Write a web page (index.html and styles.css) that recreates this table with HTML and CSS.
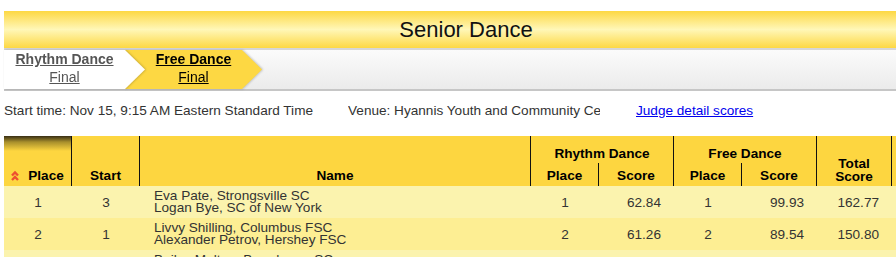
FILE: index.html
```html
<!DOCTYPE html>
<html lang="en">
<head>
<meta charset="utf-8">
<title>Senior Dance</title>
<link rel="stylesheet" href="styles.css">
</head>
<body>
<div class="page">
  <div class="title">Senior Dance</div>
  <div class="tabbar">
    <div class="tab-wrap first">
      <a class="tab done" href="#"><span class="seg">Rhythm Dance</span><span class="lvl">Final</span></a>
    </div>
    <div class="tab-wrap second">
      <a class="tab active" href="#"><span class="seg">Free Dance</span><span class="lvl">Final</span></a>
    </div>
  </div>
  <div class="info">
    <span class="start">Start time: Nov 15, 9:15 AM Eastern Standard Time</span>
    <span class="venue">Venue: Hyannis Youth and Community Center</span>
    <a class="judge" href="#">Judge detail scores</a>
  </div>
  <table class="results">
    <colgroup>
      <col class="c-place"><col class="c-start"><col class="c-name">
      <col class="c-rp"><col class="c-rs"><col class="c-fp"><col class="c-fs">
      <col class="c-total"><col class="c-extra">
    </colgroup>
    <thead>
      <tr class="h1">
        <th rowspan="2" class="sorted"><span class="sort-icon"><svg width="8" height="11" viewBox="0 0 8 11"><polyline points="1,5.5 4,2.5 7,5.5" fill="none" stroke="#ee4f30" stroke-width="2.4"/><polyline points="1,10 4,7 7,10" fill="none" stroke="#ee4f30" stroke-width="2.4"/></svg></span>Place</th>
        <th rowspan="2">Start</th>
        <th rowspan="2">Name</th>
        <th colspan="2" class="grp">Rhythm Dance</th>
        <th colspan="2" class="grp">Free Dance</th>
        <th rowspan="2" class="total">Total<br>Score</th>
        <th rowspan="2" class="extra"></th>
      </tr>
      <tr class="h2">
        <th>Place</th><th>Score</th><th>Place</th><th>Score</th>
      </tr>
    </thead>
    <tbody>
      <tr>
        <td class="ctr">1</td><td class="ctr">3</td>
        <td class="name">Eva Pate, Strongsville SC<br>Logan Bye, SC of New York</td>
        <td class="ctr">1</td><td class="num">62.84</td>
        <td class="ctr">1</td><td class="num">99.93</td>
        <td class="num">162.77</td><td></td>
      </tr>
      <tr>
        <td class="ctr">2</td><td class="ctr">1</td>
        <td class="name">Livvy Shilling, Columbus FSC<br>Alexander Petrov, Hershey FSC</td>
        <td class="ctr">2</td><td class="num">61.26</td>
        <td class="ctr">2</td><td class="num">89.54</td>
        <td class="num">150.80</td><td></td>
      </tr>
      <tr>
        <td class="ctr">3</td><td class="ctr">2</td>
        <td class="name">Bailey Melton, Broadmoor SC<br>Partner, Broadmoor SC</td>
        <td class="ctr">3</td><td class="num">58.10</td>
        <td class="ctr">3</td><td class="num">86.20</td>
        <td class="num">144.30</td><td></td>
      </tr>
    </tbody>
  </table>
</div>
</body>
</html>
```

FILE: styles.css
```css
html {
  overflow: hidden;
}
body {
  margin: 0;
  font-family: "Liberation Sans", Arial, sans-serif;
  color: #333;
  background: #fff;
}
.page {
  padding: 11px 0 0 4px;
  width: 930px;
}
.title {
  width: 924px;
  height: 37px;
  line-height: 37px;
  text-align: center;
  font-size: 22px;
  color: #111;
  background: linear-gradient(to bottom, #fdd843 0%, #fff7b8 50%, #fdd843 100%);
}
.tabbar {
  display: flex;
  height: 39px;
  width: 924px;
  border-top: 2px solid #d6d6d6;
  border-bottom: 2px solid #c6c6c6;
  background: linear-gradient(to bottom, #fbfbfb, #ebebeb);
}
.tab-wrap {
  position: relative;
  filter: drop-shadow(1px 0 1px rgba(0, 0, 0, 0.22));
}
.tab-wrap.first {
  z-index: 2;
}
.tab-wrap.second {
  z-index: 1;
  margin-left: -20px;
}
.tab {
  display: flex;
  flex-direction: column;
  align-items: center;
  height: 39px;
  font-size: 14px;
  line-height: 18px;
  text-decoration: underline;
  clip-path: polygon(0 0, calc(100% - 20px) 0, 100% 50%, calc(100% - 20px) 100%, 0 100%);
}
.tab.done {
  width: 121px;
  padding-right: 20px;
  background: #fff;
  color: #555;
}
.tab.active {
  width: 97px;
  padding: 0 20px;
  background: #fdd843;
  color: #000;
}
.tab .seg {
  font-weight: bold;
}
.info {
  display: flex;
  margin-top: 12px;
  font-size: 13.6px;
  line-height: 16px;
  color: #333;
  white-space: nowrap;
}
.info .start {
  width: 344px;
}
.info .venue {
  width: 252px;
  overflow: hidden;
}
.info .judge {
  margin-left: 36px;
  color: #0000ee;
}
.results {
  margin-top: 17px;
  table-layout: fixed;
  width: 928px;
  border-collapse: separate;
  border-spacing: 0;
  font-size: 13.6px;
}
.c-place { width: 68px; }
.c-start { width: 68px; }
.c-name { width: 391px; }
.c-rp { width: 68px; }
.c-rs { width: 75px; }
.c-fp { width: 68px; }
.c-fs { width: 75px; }
.c-total { width: 75px; }
.c-extra { width: 40px; }
.results th {
  background: #fdd640;
  color: #000;
  font-weight: bold;
  border-right: 1px solid #111;
  padding: 0 0 2px;
  line-height: 16px;
  vertical-align: bottom;
  text-align: center;
  white-space: nowrap;
}
.results th.extra {
  border-right: none;
}
.results th.grp {
  padding-bottom: 1px;
}
.results th.total {
  line-height: 13px;
  padding-bottom: 3px;
}
.results th.sorted {
  background: linear-gradient(to bottom, #382e14 0px, #a88f2c 6px, #fdd640 15px);
}
.sort-icon {
  display: inline-block;
  vertical-align: -1px;
  margin-right: 9px;
}
.sort-icon svg {
  display: block;
}
.results tr.h1 {
  height: 27px;
}
.results tr.h2 {
  height: 23px;
}
.results tbody tr {
  height: 32px;
}
.results tbody tr:nth-child(odd) td {
  background: #fbf3ae;
}
.results tbody tr:nth-child(even) td {
  background: #fdee93;
}
.results td {
  padding: 0;
  color: #333;
  vertical-align: middle;
  white-space: nowrap;
}
.results td.ctr {
  text-align: center;
}
.results td.num {
  text-align: right;
  padding-right: 13px;
}
.results td.name {
  padding-left: 14px;
  line-height: 12px;
}
```
